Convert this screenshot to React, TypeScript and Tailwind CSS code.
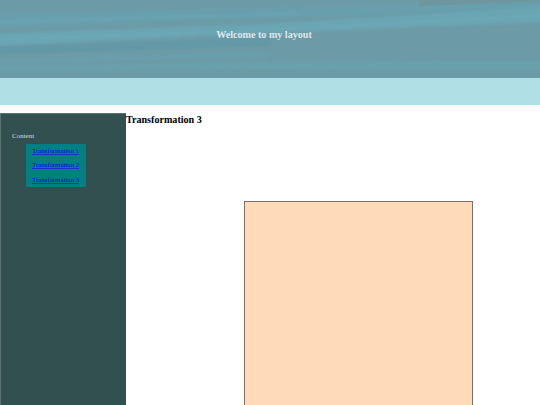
const bands = [
  { d: "M-10 14 L550 2 L550 8 L-10 28 Z", fill: "#689fad" },
  { d: "M-10 20 L300 12 L300 15 L-10 24 Z", fill: "#6ba3b1" },
  { d: "M-10 34 L270 24 L550 6 L550 22 L270 33 L-10 46 Z", fill: "#6ba5b4" },
  { d: "M-10 39 L270 29 L550 14 L550 16 L270 31 L-10 41 Z", fill: "#6ea8b7" },
  { d: "M-10 47 L270 37 L270 46 L-10 55 Z", fill: "#6398a6" },
  { d: "M-10 60 L270 52 L550 42 L550 46 L270 56 L-10 64 Z", fill: "#699fad" },
  { d: "M270 36 L550 24 L550 60 L270 62 Z", fill: "#6c9aa5" },
  { d: "M-10 66 L270 62 L550 60 L550 70 L270 70 L-10 72 Z", fill: "#6a9fac" },
  { d: "M-10 72 L270 70 L550 74 L550 85 L-10 85 Z", fill: "#6b9ba6" },
];

const links = ["Transformation 1", "Transformation 2", "Transformation 3"];

export default function App() {
  return (
    <div className="h-[405px] overflow-hidden bg-white font-['Liberation_Serif',serif]">
      <header className="relative flex h-[78px] items-center justify-center overflow-hidden bg-[#6c9ba7] pr-[12px] pb-[8px]">
        <svg className="absolute inset-0" width="540" height="78" viewBox="0 0 540 78">
          <defs>
            <filter id="soft">
              <feGaussianBlur stdDeviation="2 1" />
            </filter>
          </defs>
          <g filter="url(#soft)">
            {bands.map((b) => (
              <path key={b.d} d={b.d} fill={b.fill} />
            ))}
          </g>
          <path d="M418 0 L540 0 L540 1 L420 6 Z" fill="#6f959f" />
        </svg>
        <h1 className="relative text-[10.1px] font-bold text-[#dfe9ec]">Welcome to my layout</h1>
      </header>
      <div className="h-[27px] bg-[#b0e0e6]" />
      <div className="mt-[8px] flex h-[292px]">
        <aside className="w-[126px] border-t border-l border-[#5a7272] bg-[#325050] pt-[18px] pl-[11px]">
          <p className="text-[7px] leading-[9px] text-[#d8dcdc]">Content</p>
          <ul className="mt-[3px] ml-[14px] h-[43px] w-[60px] bg-[#008080] pt-[2px] pl-[6px]">
            {links.map((l) => (
              <li key={l} className="h-[14.25px] text-[7px] leading-[10px] tracking-[-0.1px] whitespace-nowrap">
                <a href="#" className="text-[#0000ee] underline decoration-[#1a30c8]">{l}</a>
              </li>
            ))}
          </ul>
        </aside>
        <main className="flex-1">
          <h2 className="text-[10.1px] leading-[13px] font-bold text-black">Transformation 3</h2>
          <div className="mt-[75px] ml-[118px] h-[300px] w-[229px] border border-[#7d6e62] bg-[#ffdab9]" />
        </main>
      </div>
    </div>
  );
}
